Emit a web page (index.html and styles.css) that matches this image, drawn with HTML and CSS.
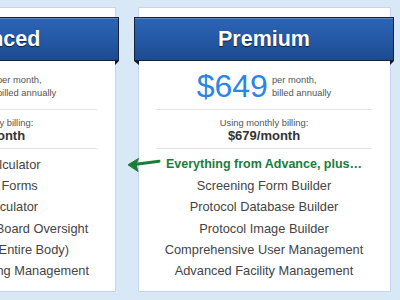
FILE: index.html
```html
<!DOCTYPE html>
<html>
<head>
<meta charset="utf-8">
<link rel="stylesheet" href="styles.css">
</head>
<body>
<div class="plans">
  <div class="card">
    <div class="banner"><h2 class="banner-title">Advanced</h2></div>
    <div class="price">
      <span class="amount">$449</span>
      <span class="terms">per month,<br>billed annually</span>
    </div>
    <div class="monthly">
      <div class="monthly-label">Using monthly billing:</div>
      <div class="monthly-value">$479/month</div>
    </div>
    <ul class="features">
      <li>Implant Calculator</li>
      <li>Screening Forms</li>
      <li>Gauss Calculator</li>
      <li>Radiology Review Board Oversight</li>
      <li>Dose Tracking (Entire Body)</li>
      <li>Resource Scheduling Management</li>
    </ul>
  </div>
  <div class="card">
    <div class="banner"><h2 class="banner-title">Premium</h2></div>
    <div class="price">
      <span class="amount">$649</span>
      <span class="terms">per month,<br>billed annually</span>
    </div>
    <div class="monthly">
      <div class="monthly-label">Using monthly billing:</div>
      <div class="monthly-value">$679/month</div>
    </div>
    <ul class="features">
      <li class="plus">
        <svg class="arrow" width="36" height="18" viewBox="0 0 36 18">
          <path d="M10 9.2 L33 6.2" stroke="#1b7d3a" stroke-width="3" stroke-linecap="round" fill="none"/>
          <path d="M2 9.8 L12.5 3.5 L10 9.3 L12 16.5 Z" fill="#1b7d3a" stroke="#1b7d3a" stroke-width="1" stroke-linejoin="round"/>
        </svg>
        Everything from Advance, plus…
      </li>
      <li>Screening Form Builder</li>
      <li>Protocol Database Builder</li>
      <li>Protocol Image Builder</li>
      <li>Comprehensive User Management</li>
      <li>Advanced Facility Management</li>
    </ul>
  </div>
</div>
</body>
</html>
```
FILE: styles.css
```css
html, body {
  margin: 0;
  padding: 0;
}
body {
  background: #d9e8f6;
  font-family: "Liberation Sans", Arial, Helvetica, sans-serif;
  width: 400px;
  height: 300px;
  overflow: hidden;
}
.plans {
  display: flex;
  gap: 22px;
  margin-left: -137px;
  padding-top: 7px;
}
.card {
  flex: 0 0 253px;
  box-sizing: border-box;
  background: #fff;
  border: 1px solid #c2d7ee;
  padding: 9px 0 10px;
}
.banner {
  position: relative;
  margin: 0 -4px 0 -5px;
  height: 44px;
  box-sizing: border-box;
  border: 1px solid #14233a;
  background: linear-gradient(to bottom, #2c64b4 0%, #2459a6 50%, #1c4a8e 100%);
  box-shadow: inset 0 1px 0 rgba(255,255,255,0.25);
  display: flex;
  align-items: center;
  justify-content: center;
}
.banner::before,
.banner::after {
  content: "";
  position: absolute;
  top: 43px;
  width: 0;
  height: 0;
}
.banner::before {
  left: -1px;
  border-top: 4px solid #0e1a2b;
  border-left: 5px solid transparent;
}
.banner::after {
  right: -1px;
  border-top: 4px solid #0e1a2b;
  border-right: 4px solid transparent;
}
.banner-title {
  margin: 0;
  color: #fff;
  font-size: 21.5px;
  font-weight: bold;
  text-shadow: 0 1px 1px rgba(0,0,0,0.65);
}
.price {
  margin: 0 18px 0 17px;
  padding: 9px 0 7px;
  border-bottom: 1px solid #e4e4e4;
  display: flex;
  align-items: center;
  justify-content: center;
  gap: 4px;
}
.amount {
  font-size: 32px;
  line-height: 32px;
  color: #2a86e2;
}
.terms {
  font-size: 9.4px;
  line-height: 13px;
  color: #555;
}
.monthly {
  margin: 0 18px 0 17px;
  padding: 6px 0 5px;
  border-bottom: 1px solid #e4e4e4;
  text-align: center;
}
.monthly-label {
  font-size: 9.4px;
  line-height: 13px;
  color: #555;
}
.monthly-value {
  font-size: 13px;
  line-height: 14px;
  font-weight: bold;
  color: #333;
}
.features {
  list-style: none;
  margin: 0 18px 0 17px;
  padding: 5px 0 0;
  text-align: center;
  font-size: 12.8px;
  line-height: 21.2px;
  color: #444;
  white-space: nowrap;
}
.features li {
  position: relative;
}
.features .plus {
  color: #1b7d3a;
  font-weight: bold;
  font-size: 12.5px;
}
.arrow {
  position: absolute;
  left: -30px;
  top: 1px;
}
```
